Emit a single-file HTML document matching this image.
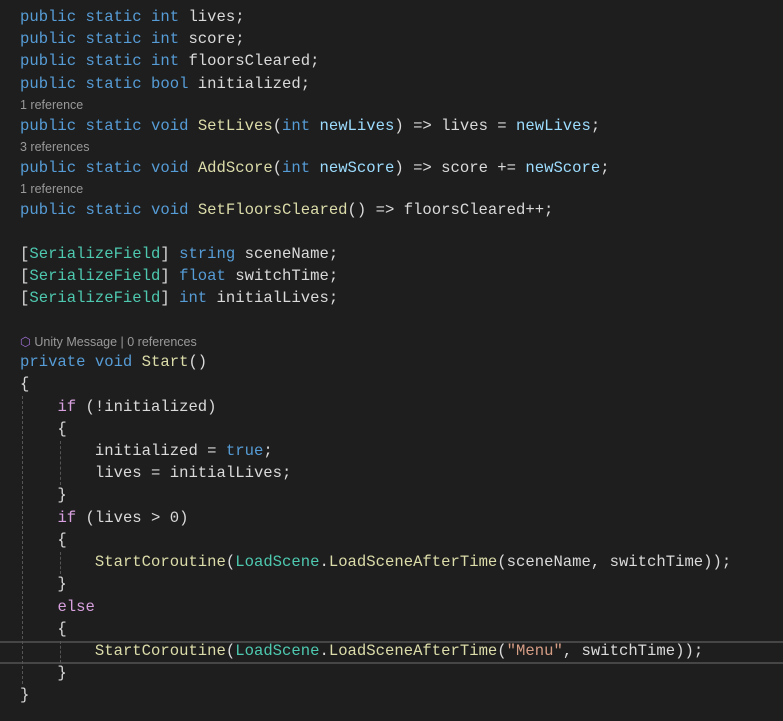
<!DOCTYPE html>
<html><head><meta charset="utf-8"><style>
body{margin:0;width:783px;height:721px;background:#1e1e1e;overflow:hidden;position:relative}
.l{position:absolute;left:20px;white-space:pre;font-family:"Liberation Mono",monospace;font-size:15.6px;line-height:22px;color:#dadada}
.c{position:absolute;left:20px;white-space:pre;font-family:"Liberation Sans",sans-serif;font-size:12.5px;line-height:16px;color:#999}
.k{color:#569cd6}.m{color:#dcdcaa}.p{color:#9cdcfe}.f{color:#d8a0df}.t{color:#4ec9b0}.s{color:#d69d85}
.g{position:absolute;width:0;border-left:1px dashed #555}
.hl{position:absolute;left:0;width:783px;top:641px;height:19px;border-top:2px solid #464646;border-bottom:2px solid #464646}
</style></head><body>
<div class="hl"></div>
<div class="g" style="left:22px;top:396px;height:288px"></div>
<div class="g" style="left:60px;top:441px;height:44px"></div>
<div class="g" style="left:60px;top:552px;height:22px"></div>
<div class="g" style="left:60px;top:641px;height:22px"></div>
<div class="l" style="top:6px"><span class="k">public static int</span> lives;</div>
<div class="l" style="top:28px"><span class="k">public static int</span> score;</div>
<div class="l" style="top:50px"><span class="k">public static int</span> floorsCleared;</div>
<div class="l" style="top:73px"><span class="k">public static bool</span> initialized;</div>
<div class="c" style="top:97px">1 reference</div>
<div class="l" style="top:115px"><span class="k">public static void</span> <span class="m">SetLives</span>(<span class="k">int</span> <span class="p">newLives</span>) =&gt; lives = <span class="p">newLives</span>;</div>
<div class="c" style="top:139px">3 references</div>
<div class="l" style="top:157px"><span class="k">public static void</span> <span class="m">AddScore</span>(<span class="k">int</span> <span class="p">newScore</span>) =&gt; score += <span class="p">newScore</span>;</div>
<div class="c" style="top:181px">1 reference</div>
<div class="l" style="top:199px"><span class="k">public static void</span> <span class="m">SetFloorsCleared</span>() =&gt; floorsCleared++;</div>
<div class="l" style="top:243px">[<span class="t">SerializeField</span>] <span class="k">string</span> sceneName;</div>
<div class="l" style="top:265px">[<span class="t">SerializeField</span>] <span class="k">float</span> switchTime;</div>
<div class="l" style="top:287px">[<span class="t">SerializeField</span>] <span class="k">int</span> initialLives;</div>
<div class="c" style="top:334px"><span style="color:#9b6fd0">⬡</span> Unity Message | 0 references</div>
<div class="l" style="top:351px"><span class="k">private void</span> <span class="m">Start</span>()</div>
<div class="l" style="top:373px">{</div>
<div class="l" style="top:396px">    <span class="f">if</span> (!initialized)</div>
<div class="l" style="top:418px">    {</div>
<div class="l" style="top:440px">        initialized = <span class="k">true</span>;</div>
<div class="l" style="top:462px">        lives = initialLives;</div>
<div class="l" style="top:484px">    }</div>
<div class="l" style="top:507px">    <span class="f">if</span> (lives &gt; 0)</div>
<div class="l" style="top:529px">    {</div>
<div class="l" style="top:551px">        <span class="m">StartCoroutine</span>(<span class="t">LoadScene</span>.<span class="m">LoadSceneAfterTime</span>(sceneName, switchTime));</div>
<div class="l" style="top:573px">    }</div>
<div class="l" style="top:596px">    <span class="f">else</span></div>
<div class="l" style="top:618px">    {</div>
<div class="l" style="top:640px">        <span class="m">StartCoroutine</span>(<span class="t">LoadScene</span>.<span class="m">LoadSceneAfterTime</span>(<span class="s">"Menu"</span>, switchTime));</div>
<div class="l" style="top:662px">    }</div>
<div class="l" style="top:684px">}</div>
</body></html>
